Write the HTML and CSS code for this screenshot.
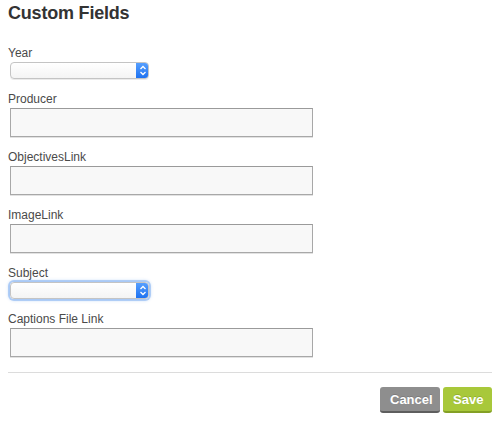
FILE: index.html
```html
<!DOCTYPE html>
<html>
<head>
<meta charset="utf-8">
<link rel="stylesheet" href="styles.css">
</head>
<body>
<div class="panel">
  <h1 class="title">Custom Fields</h1>
  <form class="form">
    <div class="field">
      <label class="label">Year</label>
      <div class="select">
        <span class="select-value"></span>
        <span class="select-cap"><svg width="8" height="11" viewBox="0 0 8 11"><path d="M1.5 4 L4 1.5 L6.5 4 M1.5 7 L4 9.5 L6.5 7" fill="none" stroke="#fff" stroke-width="1.3"/></svg></span>
      </div>
    </div>
    <div class="field">
      <label class="label">Producer</label>
      <input class="input" type="text">
    </div>
    <div class="field">
      <label class="label">ObjectivesLink</label>
      <input class="input" type="text">
    </div>
    <div class="field">
      <label class="label">ImageLink</label>
      <input class="input" type="text">
    </div>
    <div class="field">
      <label class="label">Subject</label>
      <div class="select focused">
        <span class="select-value"></span>
        <span class="select-cap"><svg width="8" height="11" viewBox="0 0 8 11"><path d="M1.5 4 L4 1.5 L6.5 4 M1.5 7 L4 9.5 L6.5 7" fill="none" stroke="#fff" stroke-width="1.3"/></svg></span>
      </div>
    </div>
    <div class="field">
      <label class="label">Captions File Link</label>
      <input class="input" type="text">
    </div>
    <div class="footer">
      <button type="button" class="btn btn-cancel">Cancel</button>
      <button type="button" class="btn btn-save">Save</button>
    </div>
  </form>
</div>
</body>
</html>
```

FILE: styles.css
```css
html, body {
  margin: 0;
  padding: 0;
  background: #fff;
}
body {
  font-family: "Liberation Sans", Arial, sans-serif;
  color: #444;
}
.panel {
  padding: 0 8px;
}
.title {
  margin: 0;
  padding-top: 2px;
  font-size: 18px;
  line-height: 22px;
  font-weight: bold;
  color: #333;
  letter-spacing: -0.2px;
}
.form {
  display: flex;
  flex-direction: column;
  margin-top: 21px;
}
.field {
  display: flex;
  flex-direction: column;
  align-items: flex-start;
  margin-bottom: 12px;
}
.label {
  font-size: 12px;
  line-height: 14px;
  color: #4a4a4a;
  padding-top: 1px;
  margin-bottom: 2px;
}
.input {
  box-sizing: border-box;
  width: 303px;
  height: 29px;
  margin: 0 0 0 2px;
  border: 1px solid #a8a8a8;
  border-top-color: #9a9a9a;
  background: #f8f8f8;
  box-shadow: 0 1px 0 #e2e2e2;
  padding: 0 4px;
  font: inherit;
  outline: none;
}
.select {
  box-sizing: border-box;
  display: flex;
  width: 139px;
  height: 17px;
  margin-left: 2px;
  border: 1px solid #c4c4c4;
  border-radius: 4px;
  background: linear-gradient(#fff, #f4f4f4);
  overflow: hidden;
  box-shadow: 0 1px 0 rgba(0,0,0,0.08);
}
.select-value {
  flex: 1;
}
.select-cap {
  width: 13px;
  margin: -1px -1px -1px 0;
  background: linear-gradient(#5aa2ff, #1a6ff0);
  display: flex;
  align-items: center;
  justify-content: center;
  border-radius: 0 4px 4px 0;
}
.select.focused {
  box-shadow: 0 0 0 2px rgba(110, 165, 240, 0.45), 0 0 3px 2px rgba(110, 165, 240, 0.3);
}
.footer {
  display: flex;
  justify-content: flex-end;
  gap: 3px;
  margin-top: 3px;
  border-top: 1px solid #dcdcdc;
  padding-top: 14px;
  padding-right: 0;
}
.btn {
  box-sizing: border-box;
  height: 26px;
  border: none;
  border-radius: 3px;
  font-family: "Liberation Sans", Arial, sans-serif;
  font-size: 13px;
  font-weight: bold;
  color: #fff;
  padding: 0 10px;
  text-shadow: 0 -1px 0 rgba(0,0,0,0.15);
}
.btn-cancel {
  width: 60px;
  background: #8e8e8e;
  border-bottom: 2px solid #5e5e5e;
}
.btn-save {
  width: 49px;
  background: #a8c83a;
  border-bottom: 2px solid #84a025;
}
```
